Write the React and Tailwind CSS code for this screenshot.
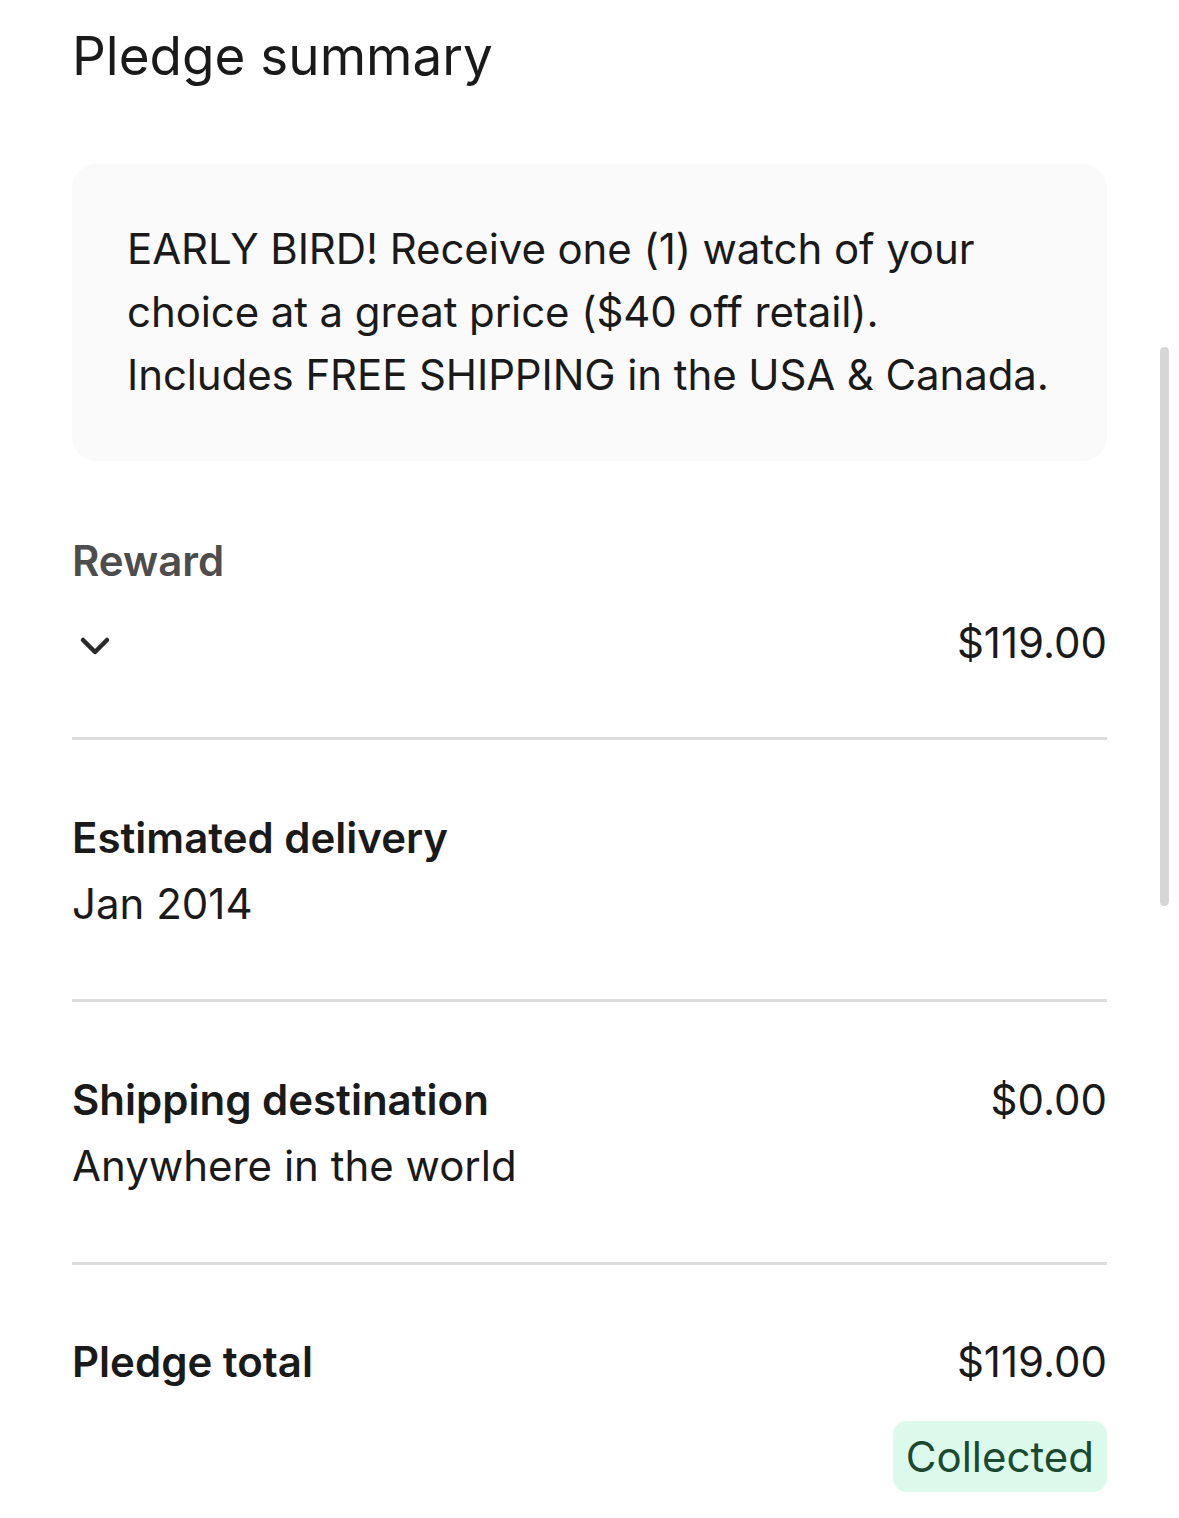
import React from "react";

const font = { fontFamily: "Inter, 'Noto Sans', sans-serif" };

function Chevron() {
  return (
    <svg width="34" height="22" viewBox="0 0 34 22" fill="none">
      <path d="M5 5 L17 17 L29 5" stroke="#2a2a2a" strokeWidth="4.5" strokeLinecap="round" strokeLinejoin="round" />
    </svg>
  );
}

export default function App() {
  return (
    <div className="relative w-[1179px] h-[1518px] bg-white overflow-hidden text-[#1a1a1a]" style={font}>
      <div className="px-[72px] pt-[22px]">
        <h1 className="text-[53px] leading-[68px] font-normal">Pledge summary</h1>

        <div className="mt-[74px] rounded-[24px] bg-[#fafafa] pl-[55px] pr-[28px] pt-[53px] pb-[55px]">
          <p className="text-[42px] leading-[63px] tracking-[-0.1px]">
            EARLY BIRD! Receive one (1) watch of your
            <br />
            choice at a great price ($40 off retail).
            <br />
            Includes FREE SHIPPING in the USA &amp; Canada.
          </p>
        </div>

        <div className="pt-[72px] pb-[66px] border-b-[3px] border-[#dcdcdc]">
          <div className="text-[42px] leading-[56px] font-semibold text-[#4d4d4d]">Reward</div>
          <div className="mt-[26px] flex items-center justify-between">
            <div className="pl-[6px] pt-[6px]"><Chevron /></div>
            <div className="text-[42px] leading-[56px]">$119.00</div>
          </div>
        </div>

        <div className="pt-[70px] pb-[67px] border-b-[3px] border-[#dcdcdc]">
          <div className="text-[42px] leading-[56px] font-semibold">Estimated delivery</div>
          <div className="mt-[10px] text-[42px] leading-[56px]">Jan 2014</div>
        </div>

        <div className="pt-[70px] pb-[68px] border-b-[3px] border-[#dcdcdc] flex justify-between">
          <div>
            <div className="text-[42px] leading-[56px] font-semibold">Shipping destination</div>
            <div className="mt-[10px] text-[42px] leading-[56px]">Anywhere in the world</div>
          </div>
          <div className="text-[42px] leading-[56px]">$0.00</div>
        </div>

        <div className="pt-[69px] flex justify-between items-start">
          <div className="text-[42px] leading-[56px] font-semibold">Pledge total</div>
          <div className="flex flex-col items-end">
            <div className="text-[42px] leading-[56px]">$119.00</div>
            <div className="mt-[31px] rounded-[14px] bg-[#dcfaec] px-[13px] py-[7px] text-[42px] leading-[57px] text-[#1b4a30]">Collected</div>
          </div>
        </div>
      </div>

      <div className="absolute left-[1160px] top-[347px] w-[9px] h-[559px] rounded-full bg-[#d6d6d6]" />
    </div>
  );
}
